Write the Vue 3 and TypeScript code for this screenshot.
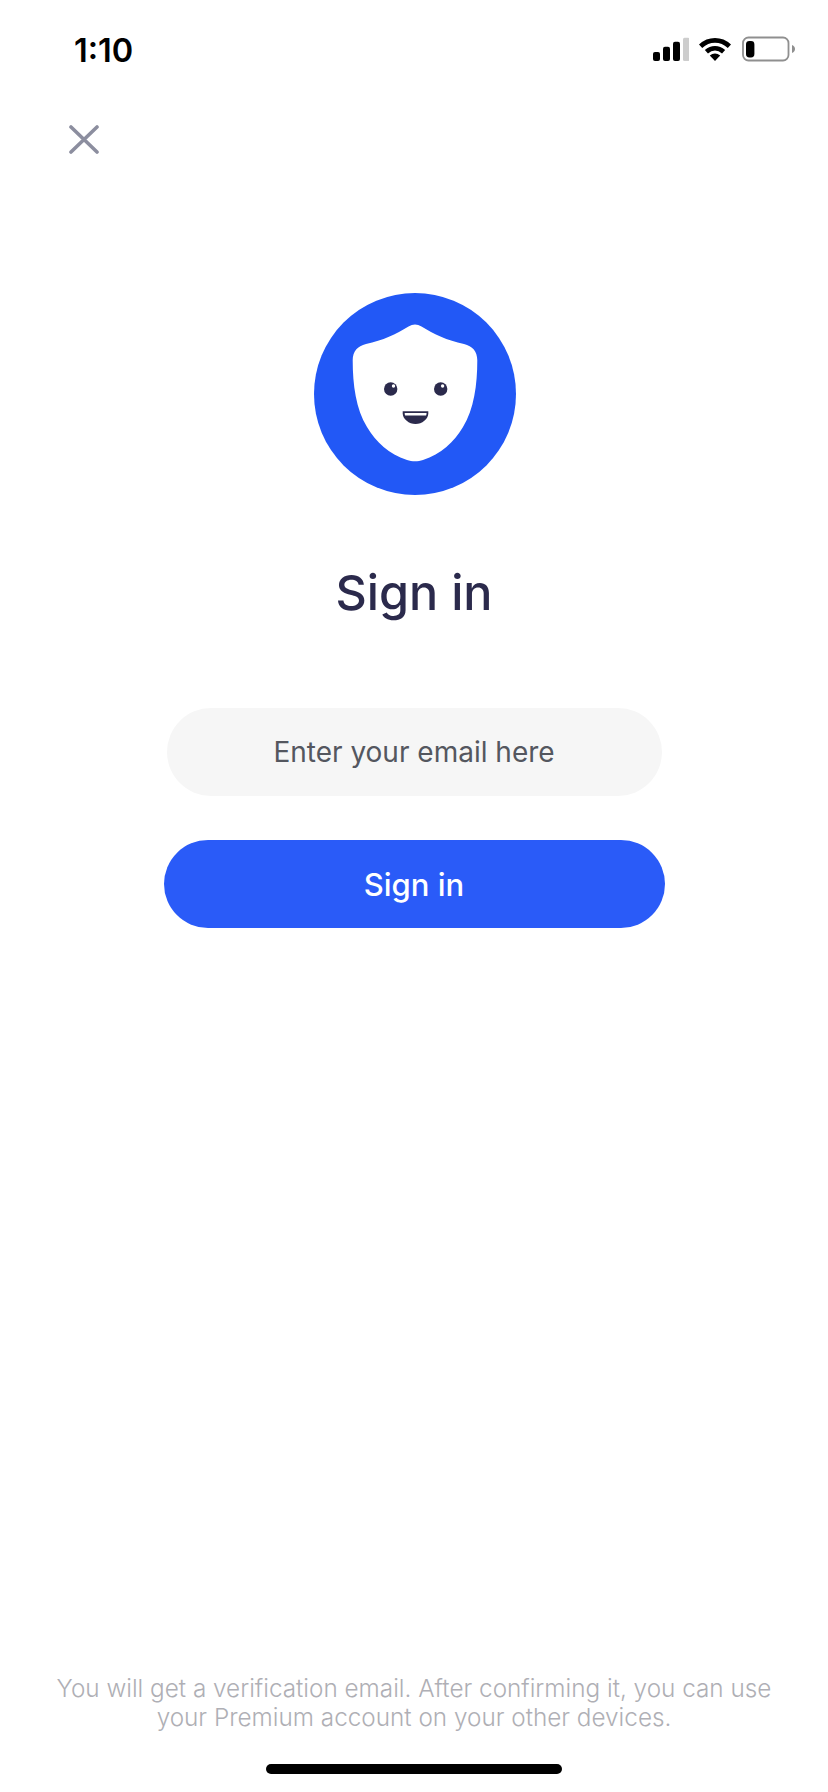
<script setup lang="ts">
const title: string = 'Sign in'
</script>

<template>
  <main class="screen">
    <header class="status">
      <span class="time">1:10</span>
      <div class="indicators">
        <svg class="signal" width="36" height="24" viewBox="0 0 36 24">
          <rect x="0" y="15" width="7" height="9" rx="2" fill="#000" />
          <rect x="10" y="9.7" width="7" height="14.3" rx="2" fill="#000" />
          <rect x="20" y="4.7" width="7" height="19.3" rx="2" fill="#000" />
          <rect x="30" y="0.7" width="6.5" height="23.3" rx="1.5" fill="#cdcdcd" />
        </svg>
        <svg class="wifi" width="32" height="24" viewBox="0 0 32 24">
          <path d="M1.6 9.2C10 1.4 22 1.4 30.4 9.2" fill="none" stroke="#000" stroke-width="4.8" />
          <path d="M7.4 14.8C12.6 10 19.4 10 24.6 14.8" fill="none" stroke="#000" stroke-width="4.6" />
          <path d="M10.8 18.6C14 15.8 18 15.8 21.2 18.6L16 24Z" fill="#000" />
        </svg>
        <svg class="battery" width="54" height="26" viewBox="0 0 54 26">
          <rect x="2" y="1.5" width="45.5" height="23" rx="5.5" fill="none" stroke="#8f8f8f" stroke-width="1.8" />
          <rect x="5" y="5" width="8.4" height="16.5" rx="3.4" fill="#000" />
          <path d="M51 9C53.2 9.8 54 11.4 54 13S53.2 16.2 51 17Z" fill="#8f8f8f" />
        </svg>
      </div>
    </header>

    <button class="close" type="button" aria-label="Close">
      <svg width="30" height="29" viewBox="0 0 30 29">
        <path d="M2 2L28 27M28 2L2 27" stroke="#8c8e9f" stroke-width="3.6" stroke-linecap="round" fill="none" />
      </svg>
    </button>

    <section class="content">
      <svg class="logo" width="202" height="202" viewBox="0 0 202 202">
        <circle cx="101" cy="101" r="101" fill="#2258f6" />
        <path
          d="M94.5 33.6Q101 29.6 107.5 33.6C120 41.5 133 47.5 150 51C158.5 53 163.3 58.5 163.3 67.3C163.3 92 160 116 149 134C140 149 127 161 109 167C104 168.8 98 168.8 93 167C75 161 62 149 53 134C42 116 38.7 92 38.7 67.3C38.7 58.5 43.5 53 52 51C69 47.5 82 41.5 94.5 33.6Z"
          fill="#fff"
        />
        <circle cx="76.7" cy="96" r="6.7" fill="#2b2a4c" />
        <circle cx="126.7" cy="96" r="6.7" fill="#2b2a4c" />
        <circle cx="79.5" cy="93" r="1.7" fill="#fff" />
        <circle cx="128.6" cy="93" r="1.7" fill="#fff" />
        <path d="M88.7 118.3H114.3V120.5C114.3 126 108 131 101.5 131S88.7 126 88.7 120.5Z" fill="#2b2a4c" />
        <path d="M90.7 120H112.5V120.8C112.5 121.5 112.3 122 112 122.4H91.2C90.9 122 90.7 121.5 90.7 120.8Z" fill="#fff" />
      </svg>
      <h1 class="title">{{ title }}</h1>
      <div class="field">Enter your email here</div>
      <button class="submit" type="button">{{ title }}</button>
    </section>

    <footer class="foot">
      <p class="note">You will get a verification email. After confirming it, you can use<br />your Premium account on your other devices.</p>
      <div class="home"></div>
    </footer>
  </main>
</template>

<style>
html, body { margin: 0; background: #fff; }
</style>

<style scoped>
.screen {
  width: 828px;
  height: 1792px;
  display: flex;
  flex-direction: column;
  background: #fff;
  font-family: Inter, "Liberation Sans", sans-serif;
  overflow: hidden;
}
.status {
  height: 100px;
  flex: none;
  box-sizing: border-box;
  padding: 32px 33px 0 74px;
  display: flex;
  justify-content: space-between;
  align-items: flex-start;
}
.time {
  font-size: 32.5px;
  font-weight: 600;
  line-height: 38px;
  color: #000;
}
.indicators {
  display: flex;
  align-items: center;
  gap: 10px;
  padding-top: 4px;
}
.close {
  flex: none;
  align-self: flex-start;
  margin: 25px 0 0 69px;
  padding: 0;
  width: 30px;
  height: 29px;
  border: 0;
  background: none;
  display: block;
}
.close svg { display: block; }
.content {
  flex: 1;
  display: flex;
  flex-direction: column;
  align-items: center;
  padding-top: 139px;
}
.logo { display: block; margin-left: 1px; }
.title {
  margin: 68px 0 0;
  font-size: 48.5px;
  line-height: 60px;
  font-weight: 500;
  color: #2b2a4c;
}
.field {
  margin-top: 85px;
  width: 495px;
  height: 88px;
  border-radius: 44px;
  background: #f6f6f6;
  display: flex;
  align-items: center;
  justify-content: center;
  font-size: 28px;
  color: #54575f;
}
.submit {
  margin-top: 44px;
  width: 501px;
  height: 88px;
  border: 0;
  padding: 0;
  border-radius: 44px;
  background: #2a5bf8;
  color: #fff;
  font-family: inherit;
  font-size: 31px;
  font-weight: 500;
}
.foot {
  flex: none;
  display: flex;
  flex-direction: column;
  align-items: center;
  padding-bottom: 18px;
}
.note {
  margin: 0;
  text-align: center;
  font-size: 24.3px;
  line-height: 29px;
  font-weight: 300;
  color: #afafb5;
}
.home {
  margin-top: 32px;
  width: 296px;
  height: 10px;
  border-radius: 5px;
  background: #000;
}
</style>
